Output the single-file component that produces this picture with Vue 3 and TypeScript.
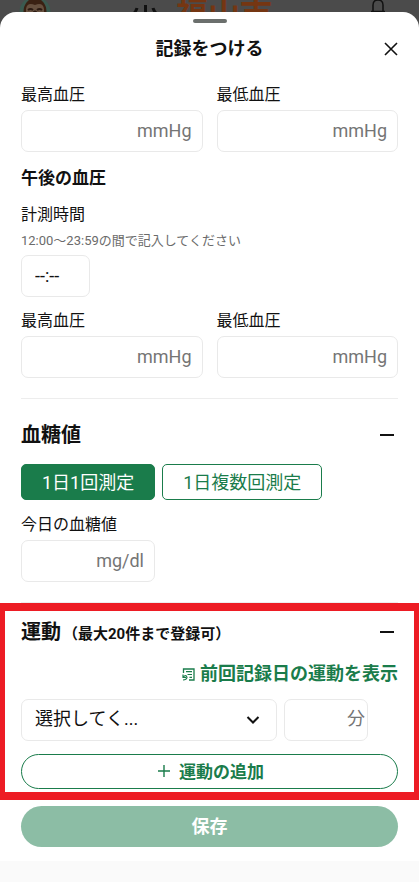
<script setup lang="ts">
import { ref } from 'vue'

type Mode = 'single' | 'multiple'

const mode = ref<Mode>('single')
const modes: { id: Mode; label: string }[] = [
  { id: 'single', label: '1日1回測定' },
  { id: 'multiple', label: '1日複数回測定' },
]

const morning = ref({ high: '', low: '' })
const afternoon = ref({ time: '', high: '', low: '' })
const glucose = ref('')
const exercise = ref({ kind: '', minutes: '' })
</script>

<template>
  <div class="page">
    <header class="topbar">
      <svg class="avatar" width="32" height="28" viewBox="0 0 32 28" aria-hidden="true">
        <circle cx="16" cy="12" r="15.5" fill="#3b5a50" />
        <ellipse cx="16" cy="12" rx="11.5" ry="14" fill="#3a2113" />
        <path d="M7 9Q8 2 16 5Q24 2 25 9V20H7Z" fill="#66503f" />
        <path d="M9 10Q11.500 8 14 10M18 10Q20.500 8 23 10" fill="none" stroke="#2b1a12" stroke-width="2" />
        <ellipse cx="16" cy="12" rx="2" ry="1.5" fill="#2b1a12" />
      </svg>
      <div class="brand">
        <svg width="28" height="28" viewBox="0 0 28 28" aria-hidden="true">
          <path d="M5 8Q4 12 0 15M13.500 5V20M21 8Q22 12 26 15" fill="none" stroke="#111" stroke-width="3" />
        </svg>
        <span class="city">福山市</span>
      </div>
      <svg class="bell" width="18" height="28" viewBox="0 0 18 28" aria-hidden="true">
        <path d="M2 11.500H16M4 12V5Q4 0 9 0Q14 0 14 5V12" fill="none" stroke="#111" stroke-width="1.500" />
      </svg>
    </header>

    <main class="sheet">
      <div class="handle"></div>
      <div class="sheet-head">
        <h1>記録をつける</h1>
        <button class="close" type="button" aria-label="閉じる">
          <svg width="14" height="14" viewBox="0 0 14 14" aria-hidden="true">
            <path d="M1 1L13 13M13 1L1 13" fill="none" stroke="#111" stroke-width="1.600" />
          </svg>
        </button>
      </div>

      <form @submit.prevent>
        <section class="block pressure">
          <div class="pair">
            <div class="field">
              <label for="am-high">最高血圧</label>
              <input id="am-high" v-model="morning.high" class="box unit" inputmode="numeric" placeholder="mmHg" />
            </div>
            <div class="field">
              <label for="am-low">最低血圧</label>
              <input id="am-low" v-model="morning.low" class="box unit" inputmode="numeric" placeholder="mmHg" />
            </div>
          </div>

          <h3>午後の血圧</h3>
          <div class="field time-field">
            <label for="pm-time">計測時間</label>
            <p class="hint">12:00〜23:59の間で記入してください</p>
            <input id="pm-time" v-model="afternoon.time" class="box time" placeholder="--:--" />
          </div>
          <div class="pair">
            <div class="field">
              <label for="pm-high">最高血圧</label>
              <input id="pm-high" v-model="afternoon.high" class="box unit" inputmode="numeric" placeholder="mmHg" />
            </div>
            <div class="field">
              <label for="pm-low">最低血圧</label>
              <input id="pm-low" v-model="afternoon.low" class="box unit" inputmode="numeric" placeholder="mmHg" />
            </div>
          </div>
        </section>

        <section class="block glucose">
          <div class="section-head">
            <h2>血糖値</h2>
            <button class="fold" type="button" aria-label="血糖値を折りたたむ"></button>
          </div>
          <div class="modes">
            <button
              v-for="m in modes"
              :key="m.id"
              type="button"
              class="mode"
              :class="{ active: mode === m.id }"
              @click="mode = m.id"
            >{{ m.label }}</button>
          </div>
          <div class="field glucose-field">
            <label for="glucose">今日の血糖値</label>
            <input id="glucose" v-model="glucose" class="box unit" inputmode="numeric" placeholder="mg/dl" />
          </div>
        </section>

        <section class="exercise">
          <div class="section-head">
            <h2>運動<small>（最大20件まで登録可）</small></h2>
            <button class="fold" type="button" aria-label="運動を折りたたむ"></button>
          </div>
          <a class="previous" href="#">
            <svg width="13" height="13" viewBox="0 0 13 13" aria-hidden="true">
              <path d="M1.500 5V1H12V12H7" fill="none" stroke="currentColor" stroke-width="1.300" />
              <path d="M4 3.700H10M5.500 6.500H10M7.500 9.300H10" fill="none" stroke="currentColor" stroke-width="1.200" />
              <path d="M1 6.500V9.500H4M1.200 9.200Q4 6 5 9.500Q4.500 12 1 12" fill="none" stroke="currentColor" stroke-width="1.200" />
            </svg>
            前回記録日の運動を表示
          </a>
          <div class="entry">
            <div class="select-wrap">
              <select v-model="exercise.kind" class="box" aria-label="運動の種類">
                <option value="">選択してく...</option>
              </select>
              <svg class="chevron" width="14" height="10" viewBox="0 0 14 10" aria-hidden="true">
                <path d="M1.500 2L7 7.500L12.500 2" fill="none" stroke="#111" stroke-width="2" />
              </svg>
            </div>
            <input v-model="exercise.minutes" class="box minutes" inputmode="numeric" placeholder="分" aria-label="運動時間" />
          </div>
          <button class="add" type="button">
            <svg width="12" height="12" viewBox="0 0 12 12" aria-hidden="true">
              <path d="M6 0V12M0 6H12" fill="none" stroke="currentColor" stroke-width="1.400" />
            </svg>
            <span>運動の追加</span>
          </button>
        </section>

        <div class="save-row">
          <button class="save" type="submit">保存</button>
        </div>
      </form>
    </main>
  </div>
</template>

<style>
body {
  margin: 0;
  background: #fafafa;
}
</style>

<style scoped>
.page {
  min-height: 100vh;
  background: #fafafa;
  color: #111;
  font-family: Roboto, "Noto Sans CJK JP", sans-serif;
  font-size: 16px;
  line-height: 24px;
}
.page *,
.page *::before {
  box-sizing: border-box;
}
h1, h2, h3, p {
  margin: 0;
}
button, input, select {
  margin: 0;
  font-family: inherit;
  color: inherit;
}
button {
  padding: 0;
  border: 0;
  background: none;
  cursor: pointer;
}
svg {
  display: block;
  flex: none;
}
.topbar {
  display: flex;
  justify-content: space-between;
  height: 32px;
  padding: 0 32px 0 19px;
  background: #4b4b4b;
}
.brand {
  display: flex;
  gap: 16px;
  margin-right: 16px;
}
.city {
  color: #753612;
  font-size: 32px;
  font-weight: 700;
  line-height: 28px;
}
.sheet {
  position: relative;
  margin-top: -20px;
  padding: 7px 0 14px;
  border-radius: 16px 16px 0 0;
  background: #fff;
}
.handle {
  width: 34px;
  height: 4px;
  margin: 0 auto;
  border-radius: 2px;
  background: #6b6f6d;
}
.sheet-head {
  display: grid;
  grid-template-columns: 14px 1fr 14px;
  align-items: center;
  padding: 14px 21px 22px;
}
h1 {
  grid-column: 2;
  font-size: 18px;
  font-weight: 700;
  line-height: 24px;
  text-align: center;
}
.block {
  margin: 0 21px;
  padding-bottom: 20px;
  border-bottom: 1px solid #ededed;
}
.pair {
  display: grid;
  grid-template-columns: 1fr 1fr;
  gap: 14px;
}
.field {
  display: flex;
  flex-direction: column;
  gap: 3px;
}
h3 {
  margin: 14px 0 13px;
  font-size: 17px;
  font-weight: 700;
  line-height: 24px;
}
.hint {
  color: #6b6b6b;
  font-size: 13px;
  line-height: 24px;
}
.time-field {
  gap: 2px;
  margin-bottom: 12px;
}
.box {
  width: 100%;
  height: 42px;
  border: 1px solid #e9e9e9;
  border-radius: 7px;
  background: #fff;
  font-size: 18px;
  outline: none;
}
.box::placeholder {
  color: #757575;
  opacity: 1;
}
.unit {
  padding: 0 10px 2px;
  text-align: right;
}
.time {
  width: 69px;
  padding: 0 13px 2px;
  font-size: 18px;
}
.time::placeholder {
  color: #111;
}
.glucose {
  padding-top: 21px;
}
.section-head {
  display: flex;
  align-items: center;
  justify-content: space-between;
}
h2 {
  font-size: 20px;
  font-weight: 700;
  line-height: 30px;
}
h2 small {
  margin-left: 2px;
  font-size: 15px;
  line-height: 20px;
}
.fold {
  width: 22px;
  height: 30px;
}
.fold::before {
  content: "";
  display: block;
  width: 14px;
  height: 2px;
  margin: 0 auto;
  background: #111;
}
.modes {
  display: flex;
  gap: 7px;
  margin: 14px 0 13px;
}
.mode {
  height: 36px;
  padding: 0 20px 3px;
  border: 1px solid #1a7c4b;
  border-radius: 5px;
  color: #1a7c4b;
  font-size: 18px;
}
.mode.active {
  background: #1a7c4b;
  color: #fff;
}
.glucose-field {
  width: 134px;
}
.exercise {
  display: flex;
  flex-direction: column;
  padding: 6px 16px 3px;
  border: solid #ed1c24;
  border-width: 8px 5px;
}
.previous {
  display: flex;
  align-items: center;
  align-self: flex-end;
  gap: 5px;
  margin: 15px 0 13px;
  color: #1a7c4b;
  font-size: 18px;
  font-weight: 700;
  text-decoration: none;
}
.entry {
  display: grid;
  grid-template-columns: 1fr 84px;
  gap: 7px;
  margin: 0 30px 13px 0;
}
.select-wrap {
  display: grid;
  align-items: center;
}
.select-wrap > * {
  grid-area: 1 / 1;
}
.select-wrap select {
  padding: 0 40px 3px 13px;
  appearance: none;
}
.chevron {
  justify-self: end;
  margin-right: 17px;
  pointer-events: none;
}
.minutes {
  padding: 0 2px 3px;
  text-align: right;
}
.add {
  display: flex;
  align-items: center;
  justify-content: center;
  gap: 9px;
  height: 35px;
  padding: 0 0 2px 3px;
  border: 1px solid #1a7c4b;
  border-radius: 18px;
  color: #1a7c4b;
  font-size: 17px;
  font-weight: 700;
}
.save-row {
  padding: 6px 21px 0;
}
.save {
  width: 100%;
  height: 41px;
  padding-bottom: 3px;
  border-radius: 21px;
  background: #8cbda5;
  color: #fff;
  font-size: 18px;
  font-weight: 700;
}
</style>
